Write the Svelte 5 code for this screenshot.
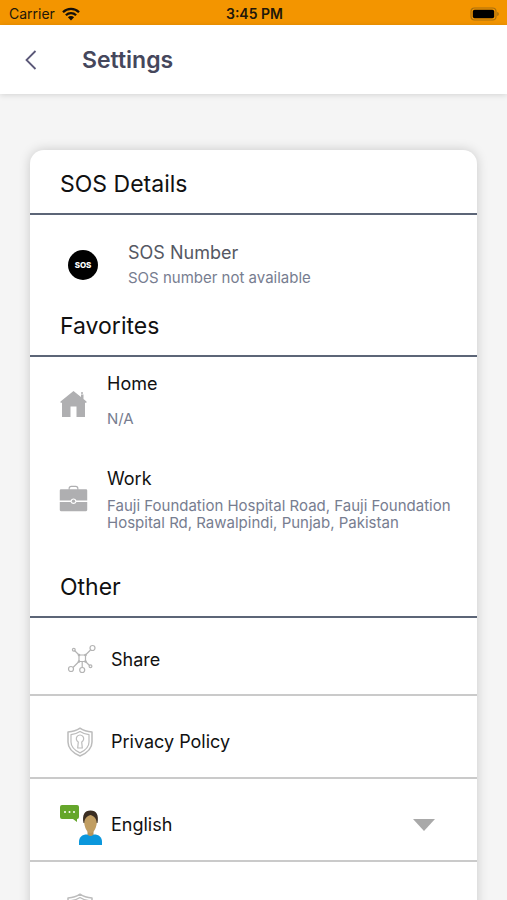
<script>
  let language = $state('English');
  const languages = ['English', 'Urdu'];
  const favorites = [
    { id: 'home', title: 'Home', address: 'N/A' },
    {
      id: 'work',
      title: 'Work',
      address: 'Fauji Foundation Hospital Road, Fauji Foundation Hospital Rd, Rawalpindi, Punjab, Pakistan'
    }
  ];
</script>

{#snippet shield()}
  <svg class="icon-shield" viewBox="0 0 28 30" aria-hidden="true">
    <g fill="none" stroke="#bcbcbc" stroke-width="1.2" stroke-linejoin="round">
      <path stroke-width="1.5" d="M14 1.200C10.500 3.800 6.500 4.800 2 5v10c0 6.500 5 11 12 14 7-3 12-7.500 12-14V5C21.500 4.800 17.500 3.800 14 1.200z" />
      <path d="M14 4.500C11 6.500 8 7.300 5 7.600V15c0 5 3.500 8.300 9 10.900 5.500-2.600 9-5.900 9-10.900V7.600C20 7.300 17 6.500 14 4.500z" />
      <path d="M12.300 15a3.700 3.700 0 1 1 3.400 0l.6 6h-4.600z" />
    </g>
  </svg>
{/snippet}

<div class="screen">
  <div class="status">
    <span class="carrier">
      Carrier
      <svg width="18" height="14" viewBox="0 0 18 14" aria-hidden="true">
        <g fill="none" stroke="#15100a" stroke-width="2.3">
          <path d="M1 5.200a11.300 11.300 0 0 1 16 0" />
          <path d="M3.900 8.200a7.200 7.200 0 0 1 10.200 0" />
        </g>
        <path d="M9 13.500L5.900 10.300a4.400 4.400 0 0 1 6.200 0z" fill="#15100a" />
      </svg>
    </span>
    <span class="time">3:45 PM</span>
    <svg class="battery" width="30" height="14" viewBox="0 0 30 14" aria-hidden="true">
      <rect x="1" y="1" width="25" height="12" rx="3.500" fill="none" stroke="#a9700f" stroke-width="1.2" />
      <rect x="2.800" y="2.800" width="21.400" height="8.400" rx="1.800" fill="#000" />
      <path d="M27.200 5c2.200.7 2.200 3.300 0 4z" fill="#a9700f" />
    </svg>
  </div>

  <header>
    <button class="back" aria-label="Back">
      <svg width="12" height="20" viewBox="0 0 12 20" aria-hidden="true">
        <path d="M10.500 1L1.500 10l9 9" fill="none" stroke="#5b5878" stroke-width="1.800" />
      </svg>
    </button>
    <h1>Settings</h1>
  </header>

  <main>
    <div class="card">
      <h2>SOS Details</h2>
      <section class="sos">
        <svg width="30" height="30" viewBox="0 0 30 30" aria-hidden="true">
          <circle cx="15" cy="15" r="15" />
          <text x="15" y="18" text-anchor="middle">SOS</text>
        </svg>
        <div>
          <h3>SOS Number</h3>
          <p>SOS number not available</p>
        </div>
      </section>

      <h2>Favorites</h2>
      <section class="favorites">
        {#each favorites as place (place.id)}
          <article class={place.id}>
            {#if place.id === 'home'}
              <svg width="28" height="28" viewBox="0 0 28 28" aria-hidden="true">
                <path d="M14 1L1 11.500v1.200h1.500V27H11V16.500h6V27h8.500V12.700H27v-1.200l-3-2.400V4.500h-2.500v2.600z" fill="#afafb1" />
                <circle cx="22.500" cy="3" r="1" fill="#afafb1" />
              </svg>
            {:else}
              <svg width="30" height="28" viewBox="0 0 30 28" aria-hidden="true">
                <path d="M10.500 4.500V3.200C10.500 1.800 11.300 1 12.700 1h4.600c1.400 0 2.200.8 2.200 2.200v1.300" fill="none" stroke="#afafb1" stroke-width="1.200" />
                <path d="M2 4h26q1.200 0 1.200 1.200V15.500H18a3.200 3.200 0 0 0-6 0H.8V5.200Q.8 4 2 4zM.8 17H12a3.200 3.200 0 0 0 6 0h11.200v8.500q0 1.200-1.200 1.200H2Q.8 26.700.8 25.500z" fill="#afafb1" />
                <circle cx="15" cy="16.300" r="1.700" fill="#afafb1" />
              </svg>
            {/if}
            <div>
              <h3>{place.title}</h3>
              <p>{place.address}</p>
            </div>
          </article>
        {/each}
      </section>

      <h2>Other</h2>
      <button class="row first">
        <svg class="icon-share" viewBox="0 0 30 30" aria-hidden="true">
          <g fill="none" stroke="#b4b4b4" stroke-width="1.200">
            <rect x="12" y="11" width="6.500" height="6.500" rx="1" />
            <path d="M12 11L7.500 6.500M18.500 11l5-5M12 17.500l-6 6M18.500 17.500l4 4M15.200 17.500v6" />
            <circle cx="25.500" cy="4" r="2.500" />
            <circle cx="4" cy="25" r="2.500" />
            <circle cx="15.200" cy="26" r="2.500" />
            <circle cx="6.800" cy="5.800" r="1.400" />
            <circle cx="23.500" cy="22.300" r="1.400" />
          </g>
          <g fill="#b4b4b4">
            <circle cx="12" cy="11" r="1.300" />
            <circle cx="18.500" cy="11" r="1.300" />
            <circle cx="12" cy="17.500" r="1.300" />
            <circle cx="18.500" cy="17.500" r="1.300" />
          </g>
        </svg>
        Share
      </button>
      <button class="row">
        {@render shield()}
        Privacy Policy
      </button>
      <label class="row language">
        <svg class="icon-language" viewBox="0 0 44 42" aria-hidden="true">
          <path d="M2 1h15q2 0 2 2v10q0 2-2 2v3l-4-3H2q-2 0-2-2V3q0-2 2-2z" fill="#65a62b" />
          <g fill="#fff">
            <circle cx="5" cy="8" r="1" />
            <circle cx="9.500" cy="8" r="1" />
            <circle cx="14" cy="8" r="1" />
          </g>
          <path d="M19 41v-3c0-5 3-7.500 8-7.500h7c5 0 8 2.500 8 7.500v3z" fill="#0b97dc" />
          <path d="M27.500 27h6v3.500q-3 3-6 0z" fill="#b5935a" />
          <path d="M24 16c0-5 3-7 6.500-7s6.500 2 6.500 7c0 7-3 13-6.500 13S24 23 24 16z" fill="#c19e62" />
          <path d="M23.500 19c-1.500-8 1-12.500 7-12.500s8.500 4.500 7 12.500h-.8c-.2-4.500-2-6.500-6.200-8-4.200 1.500-6 3.500-6.200 8z" fill="#3a2d22" />
        </svg>
        <select bind:value={language} aria-label="Language">
          {#each languages as name}
            <option>{name}</option>
          {/each}
        </select>
        <svg class="caret" width="22" height="12" viewBox="0 0 22 12" aria-hidden="true">
          <path d="M0 0h22L11 12z" fill="#a9a9a9" />
        </svg>
      </label>
      <button class="row" aria-label="Terms and Conditions">
        {@render shield()}
      </button>
    </div>
  </main>
</div>

<style>
  :global(body) {
    margin: 0;
  }
  .screen {
    display: flex;
    flex-direction: column;
    height: 100vh;
    background: #f5f5f5;
    color: #111;
    font-family: Inter, Roboto, sans-serif;
  }
  h1, h2, h3, p {
    margin: 0;
    font-weight: 400;
  }
  svg {
    flex: none;
  }
  button, select {
    padding: 0;
    border: 0;
    background: none;
    color: inherit;
    font: inherit;
    text-align: left;
  }
  .status {
    display: grid;
    grid-template-columns: 1fr auto 1fr;
    align-items: center;
    flex: none;
    height: 25px;
    padding: 2px 7px 0 9px;
    box-sizing: border-box;
    background: #f39500;
    color: #21170a;
    font-size: 14px;
  }
  .carrier {
    display: flex;
    align-items: center;
    gap: 7px;
  }
  .time {
    font-weight: 600;
  }
  .battery {
    justify-self: end;
  }
  header {
    display: flex;
    align-items: center;
    flex: none;
    height: 69px;
    background: #fff;
    box-shadow: 0 1px 6px rgba(0, 0, 0, 0.14);
    z-index: 1;
  }
  .back {
    display: flex;
    justify-content: center;
    width: 62px;
    margin-right: 20px;
  }
  h1 {
    color: #45475c;
    font-size: 23px;
    font-weight: 600;
  }
  main {
    flex: 1;
    min-height: 0;
    padding: 56px 30px 0;
    overflow-y: auto;
    scrollbar-width: none;
  }
  .card {
    padding-top: 1px;
    border-radius: 14px;
    background: #fff;
    box-shadow: 0 0 12px rgba(0, 0, 0, 0.18);
  }
  h2 {
    padding: 4px 0 0 30px;
    border-bottom: 2px solid #5c6577;
    font-size: 23px;
    line-height: 58px;
  }
  h3 {
    font-size: 18px;
    line-height: 24px;
  }
  p {
    color: #777d90;
    font-size: 15px;
    line-height: 17px;
  }
  .sos {
    display: flex;
    align-items: flex-start;
    gap: 30px;
    height: 78px;
    padding: 0 30px 0 38px;
    box-sizing: border-box;
  }
  .sos div {
    padding-top: 26px;
  }
  .sos h3 {
    color: #555863;
  }
  .sos p {
    margin-top: 4px;
  }
  .sos svg {
    margin-top: 35px;
  }
  .sos text {
    fill: #fff;
    font-size: 8px;
    font-weight: 800;
  }
  .favorites {
    height: 197px;
  }
  article {
    display: flex;
    align-items: flex-start;
    gap: 19px;
    padding: 15px 20px 0 29px;
  }
  article svg {
    width: 29px;
    margin-top: 18px;
  }
  .home {
    height: 80px;
  }
  .home p {
    margin-top: 14px;
  }
  .work p {
    margin-top: 6px;
  }
  .row {
    display: flex;
    align-items: center;
    width: 100%;
    height: 83px;
    padding: 10px 30px 0;
    box-sizing: border-box;
    border-bottom: 2px solid #cacaca;
    font-size: 18px;
  }
  .first {
    height: 78px;
    padding-top: 6px;
  }
  .icon-share {
    width: 30px;
    height: 30px;
    margin: 0 14px 0 7px;
  }
  .icon-shield {
    width: 28px;
    height: 30px;
    margin: 0 17px 0 6px;
  }
  .icon-language {
    width: 44px;
    height: 42px;
    margin-right: 7px;
  }
  select {
    flex: 1;
    appearance: none;
  }
  .caret {
    margin-right: 12px;
  }
</style>
